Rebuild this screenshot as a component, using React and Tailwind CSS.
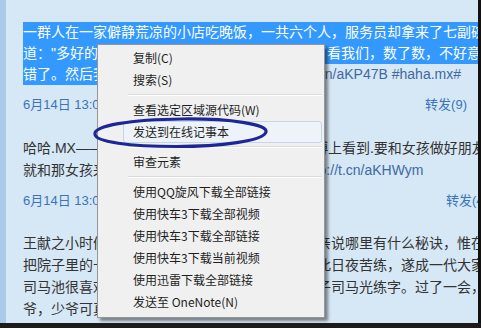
import React from 'react';

const menuItems = [
  { label: '复制(C)' },
  { label: '搜索(S)' },
  { sep: true },
  { label: '查看选定区域源代码(W)' },
  { label: '发送到在线记事本', active: true },
  { sep: true },
  { label: '审查元素' },
  { sep: true },
  { label: '使用QQ旋风下载全部链接' },
  { label: '使用快车3下载全部视频' },
  { label: '使用快车3下载全部链接' },
  { label: '使用快车3下载当前视频' },
  { label: '使用迅雷下载全部链接' },
  { label: '发送至 OneNote(N)' },
];

const ContextMenu = () => (
  <div className="absolute left-[91px] top-[44px] w-[228px] h-[274px] bg-[#f0f0f0] border border-[#979797] shadow-[3px_3px_3px_rgba(0,0,0,0.45)] pt-[2px] font-['Noto_Sans_CJK_SC',sans-serif] text-[12px] text-[#1e1e1e]">
    {menuItems.map((item, i) =>
      item.sep ? (
        <div key={i} className="h-[8px] flex flex-col justify-center pl-[30px] pr-[2px]">
          <div className="h-px bg-[#dcdcdc]" />
          <div className="h-px bg-white" />
        </div>
      ) : (
        <div
          key={i}
          className={
            item.active
              ? 'h-[22px] leading-[20px] ml-[25px] mr-[2px] pl-[9px] border border-[#c6d6ea] rounded-[3px] bg-[#eef3f9]'
              : 'h-[22px] leading-[22px] pl-[35px]'
          }
        >
          {item.label}
        </div>
      )
    )}
  </div>
);

const Ellipse = () => (
  <svg className="absolute left-[84px] top-[114px]" width="182" height="38" viewBox="0 0 182 38">
    <path
      d="M5 20 C3 12, 40 5.5, 92 5 C140 4.5, 178 10, 176 18 C174 27, 130 32.5, 86 32.5 C40 32.5, 5 28, 5 20 Z"
      fill="none"
      stroke="#1c2696"
      strokeWidth="3.2"
    />
  </svg>
);

const App = () => {
  const link = 'text-[#3f6aa1]';
  const date = 'text-[#3a74b9]';

  return (
    <div className="w-[481px] h-[328px] overflow-hidden flex flex-col bg-[#1b1b1b]">
      <div className="flex flex-1 min-h-0">
        <div className="w-[6px] bg-[#a9cae8]" />
        <div className="flex-1 relative overflow-hidden bg-[#d6e7f6] pl-[17px] pt-[22px] text-[#333] font-['Liberation_Sans','Noto_Sans_CJK_SC',sans-serif] text-[14px]">
          {/* post 1 */}
          <div className="leading-[21px]">
            <div className="h-[21px] whitespace-nowrap bg-[#3399ff] text-white -mr-[20px]">
              一群人在一家僻静荒凉的小店吃晚饭，一共六个人，服务员却拿来了七副碗筷。
            </div>
            <div className="h-[21px] whitespace-nowrap bg-[#3399ff] text-white -mr-[20px]">
              道："多好的小店，就是人少！"服务员奇怪地看了看我们，数了数，不好意思地说：
            </div>
            <div className="h-[21px] whitespace-nowrap">
              <span className="inline-block h-[21px] bg-[#3399ff] text-white">错了。然后我们都笑了</span>
              ，原来是这样啊：<span className={link}>http://t.cn/aKP47B #haha.mx#</span>
            </div>
          </div>
          <div className="mt-[10px] h-[20px] leading-[20px] text-[13px] flex justify-between whitespace-nowrap pr-[11px]">
            <span className={date}>6月14日 13:05</span>
            <span className={date}>转发(9)</span>
          </div>

          {/* post 2 */}
          <div className="mt-[22px] leading-[22px]">
            <div className="h-[22px] whitespace-nowrap">哈哈.MX——今天我偶然在一位好朋友的新浪微博上看到.要和女孩做好朋友</div>
            <div className="h-[22px] whitespace-nowrap">
              就和那女孩来一场说走就走的旅行吧，哈哈！<span className={link}>http://t.cn/aKHWym</span>
            </div>
          </div>
          <div className="mt-[10px] h-[20px] leading-[20px] text-[13px] flex justify-between whitespace-nowrap">
            <span className={date}>6月14日 13:00</span>
            <span className={date + ' -mr-[17px]'}>转发(45)</span>
          </div>

          {/* post 3 */}
          <div className="mt-[21px] leading-[22px]">
            <div className="h-[22px] whitespace-nowrap">王献之小时候问父亲王羲之写好字有何诀窍，父亲说哪里有什么秘诀，惟在苦练。</div>
            <div className="h-[22px] whitespace-nowrap">把院子里的十八缸水写完，你就知道了。献之从此日夜苦练，遂成一代大家。</div>
            <div className="h-[22px] whitespace-nowrap">司马池很喜欢书法，常常在书房里静静地看着儿子司马光练字。过了一会，</div>
            <div className="h-[22px] whitespace-nowrap">爷，少爷可真是个勤奋的孩子啊。</div>
          </div>

          <ContextMenu />
          <Ellipse />
        </div>
        <div className="w-[3px] bg-[#111]" />
      </div>
      <div className="h-[5px] bg-[#1b1b1b]" />
    </div>
  );
};

export default App;
